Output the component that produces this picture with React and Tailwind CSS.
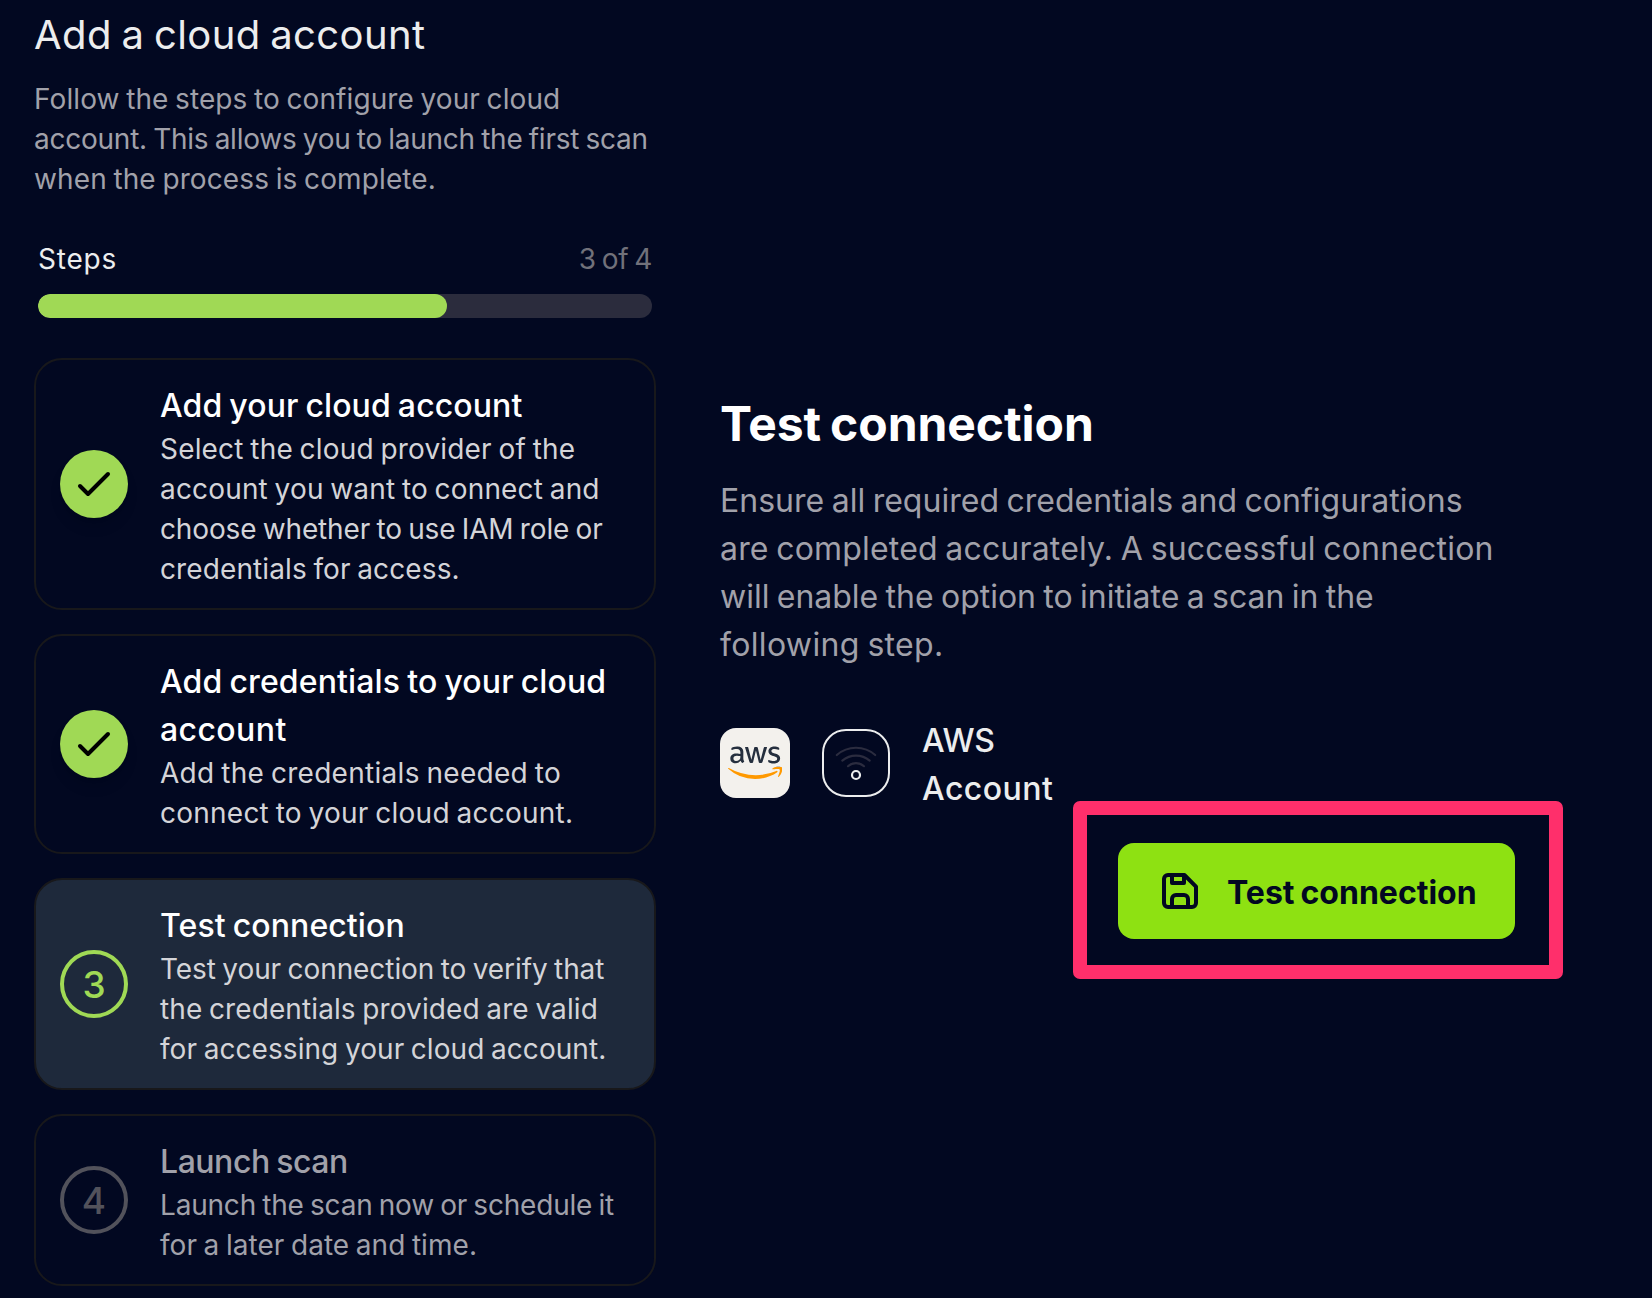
import React from "react";
import { FaAws } from "react-icons/fa6";

function Line({ className = "", children }) {
  return <span className={`block whitespace-nowrap [word-spacing:-0.05em] ${className}`}>{children}</span>;
}

function Check() {
  return (
    <div className="flex h-[68px] w-[68px] shrink-0 items-center justify-center rounded-full bg-[#a0d955] shadow-lg">
      <svg className="size-12" viewBox="0 0 24 24" fill="none" stroke="#000" strokeWidth="2" strokeLinecap="round" strokeLinejoin="round">
        <path d="M5 13l4 4L19 7" />
      </svg>
    </div>
  );
}

function StepNumber({ active, children }) {
  return (
    <div
      className={`flex h-[68px] w-[68px] shrink-0 items-center justify-center rounded-full border-4 pt-px text-[37px] leading-10 font-medium ${
        active ? "border-[#a0d955] text-[#a0d955]" : "border-[#52525b] text-[#52525b]"
      }`}
    >
      {children}
    </div>
  );
}

function StepCard({ marker, title, lines, state = "done" }) {
  return (
    <li
      className={`flex items-center gap-8 rounded-[28px] border-2 border-[#18181b] px-6 py-5 ${
        state === "active" ? "bg-[#1e293b]" : ""
      }`}
    >
      {marker}
      <div>
        <h3 className={`pt-0.5 text-[32px] leading-[48px] font-medium ${state === "pending" ? "text-[#a1a1aa]" : "text-white"}`}>{title}</h3>
        <p className={`-mt-px -mb-px text-[28px] leading-10 ${state === "pending" ? "text-[#a1a1aa]" : "text-[#d4d4d8]"}`}>{lines}</p>
      </div>
    </li>
  );
}

function SaveIcon() {
  return (
    <svg className="size-12 shrink-0" viewBox="0 0 24 24" fill="none" stroke="currentColor" strokeWidth="2" strokeLinejoin="round">
      <path d="M6 4h8.2L20 9.8V18a2 2 0 0 1-2 2H6a2 2 0 0 1-2-2V6a2 2 0 0 1 2-2Z" />
      <path d="M8 4v4h6V4" />
      <path d="M8 20v-4a2 2 0 0 1 2-2h4a2 2 0 0 1 2 2v4" />
    </svg>
  );
}

function AwsBadge() {
  return (
    <div className="flex h-[70px] w-[70px] shrink-0 items-center justify-center rounded-2xl bg-[#f3f1ed]">
      <svg width="0" height="0" className="absolute">
        <linearGradient id="aws-fill" x1="0" y1="0" x2="0" y2="1">
          <stop offset="0.625" stopColor="#252f3e" />
          <stop offset="0.625" stopColor="#ff9900" />
        </linearGradient>
      </svg>
      <FaAws className="h-[43.5px] w-[54.4px]" fill="url(#aws-fill)" />
    </div>
  );
}

function ConnectionBadge() {
  return (
    <div className="flex h-[68px] w-[68px] shrink-0 items-center justify-center rounded-3xl border-2 border-[#ecedee]">
      <svg className="h-16 w-16" viewBox="2 2 64 64" fill="none" strokeWidth="2.2" strokeLinecap="round">
        <g stroke="#2b2c3f">
          <path d="M14.8 26a29 29 0 0 1 38.4 0" />
          <path d="M20.3 31.6a21.5 21.5 0 0 1 27.4 0" />
          <path d="M26 37.2a12 12 0 0 1 16 0" />
        </g>
        <circle cx="34" cy="46" r="4" stroke="#ecedee" />
      </svg>
    </div>
  );
}

export default function App() {
  return (
    <main className="flex h-[1298px] w-[1652px] overflow-hidden bg-[#020821] font-['Inter',sans-serif]">
      <section className="ml-[34px] w-[622px] pt-[7px]">
        <h1 className="text-[40px] leading-[56px] text-[#ecedee]">
          <Line className="tracking-[0.01em]">Add a cloud account</Line>
        </h1>
        <p className="mt-4 text-[28px] leading-10 text-[#a1a1aa]">
          <Line className="tracking-[0.0035em]">Follow the steps to configure your cloud</Line>
          <Line className="tracking-[-0.0085em]">account. This allows you to launch the first scan</Line>
          <Line className="tracking-[0.0042em]">when the process is complete.</Line>
        </p>

        <div className="mt-10 px-1">
          <div className="flex justify-between text-[28px] leading-10">
            <Line className="tracking-[0.0275em] text-[#ecedee]">Steps</Line>
            <Line className="tracking-[-0.0136em] text-[#71717a]">3 of 4</Line>
          </div>
          <div className="mt-[15px] h-6 overflow-hidden rounded-full bg-[#2b2c3d]">
            <div className="h-full w-2/3 rounded-full bg-[#a0d955]" />
          </div>
        </div>

        <ol className="mt-10 flex flex-col gap-6">
          <StepCard
            marker={<Check />}
            title={<Line className="tracking-[0.003em]">Add your cloud account</Line>}
            lines={
              <>
                <Line className="tracking-[0.0065em]">Select the cloud provider of the</Line>
                <Line className="tracking-[0.006em]">account you want to connect and</Line>
                <Line className="tracking-[-0.005em]">choose whether to use IAM role or</Line>
                <Line className="tracking-[0.004em]">credentials for access.</Line>
              </>
            }
          />
          <StepCard
            marker={<Check />}
            title={
              <>
                <Line className="tracking-[0.004em]">Add credentials to your cloud</Line>
                <Line className="tracking-[0.0128em]">account</Line>
              </>
            }
            lines={
              <>
                <Line className="tracking-[0.0103em]">Add the credentials needed to</Line>
                <Line className="tracking-[0.0085em]">connect to your cloud account.</Line>
              </>
            }
          />
          <StepCard
            state="active"
            marker={<StepNumber active>3</StepNumber>}
            title={<Line className="tracking-[0.003em]">Test connection</Line>}
            lines={
              <>
                <Line className="tracking-[-0.0024em]">Test your connection to verify that</Line>
                <Line className="tracking-[0.0038em]">the credentials provided are valid</Line>
                <Line className="tracking-[0.0025em]">for accessing your cloud account.</Line>
              </>
            }
          />
          <StepCard
            state="pending"
            marker={<StepNumber>4</StepNumber>}
            title={<Line className="tracking-[-0.0145em]">Launch scan</Line>}
            lines={
              <>
                <Line className="tracking-[-0.0072em]">Launch the scan now or schedule it</Line>
                <Line className="tracking-[0.002em]">for a later date and time.</Line>
              </>
            }
          />
        </ol>
      </section>

      <section className="ml-16 flex w-[795px] flex-col pt-[396px]">
        <h2 className="text-[48px] leading-[56px] font-bold text-white">
          <Line className="tracking-[-0.001em]">Test connection</Line>
        </h2>
        <p className="mt-[25px] text-[32px] leading-[48px] text-[#a1a1aa]">
          <Line className="tracking-[0.0007em]">Ensure all required credentials and configurations</Line>
          <Line className="tracking-[0.0055em]">are completed accurately. A successful connection</Line>
          <Line className="tracking-[-0.0005em]">will enable the option to initiate a scan in the</Line>
          <Line className="tracking-[0.0104em]">following step.</Line>
        </p>

        <div className="mt-[46px] flex h-24 items-center gap-8">
          <AwsBadge />
          <ConnectionBadge />
          <div className="pt-[3px] text-[32px] leading-[48px] font-medium text-[#ecedee]">
            <Line className="tracking-[-0.008em]">AWS</Line>
            <Line className="tracking-[0.0145em]">Account</Line>
          </div>
        </div>

        <div className="relative mt-8 w-[397px] self-end">
          <button className="flex h-24 w-full items-center gap-[23px] rounded-2xl bg-[#8ee112] pl-[38px] text-[#020821]">
            <SaveIcon />
            <span className="pt-[3px] text-[32px] leading-[48px] font-bold">
              <Line>Test connection</Line>
            </span>
          </button>
          <div className="pointer-events-none absolute -top-[42px] -right-12 -bottom-[40px] -left-[45px] rounded-[7px] border-[14px] border-[#ff2f6b]" />
        </div>
      </section>
    </main>
  );
}
